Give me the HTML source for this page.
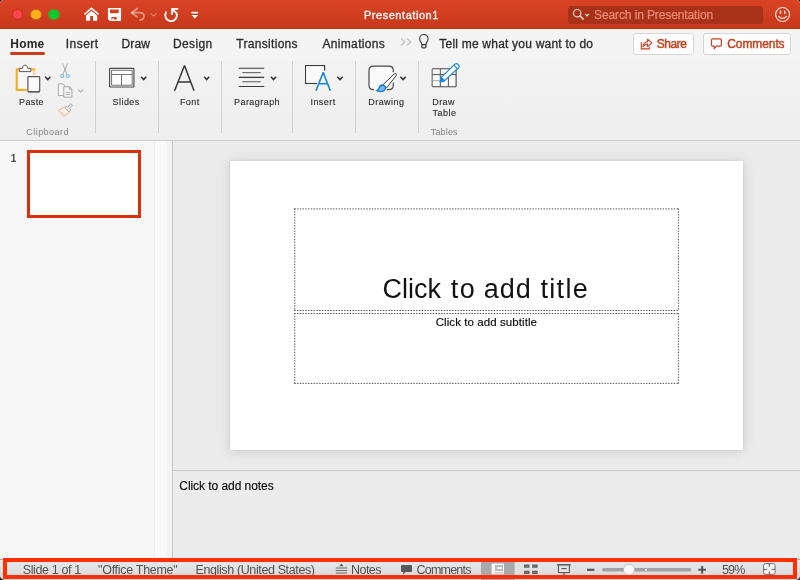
<!DOCTYPE html>
<html lang="en">
<head>
<meta charset="utf-8">
<title>Presentation1</title>
<style>
html,body{margin:0;padding:0;}
body{width:800px;height:580px;overflow:hidden;position:relative;background:linear-gradient(90deg,#000 0,#000 12px,rgba(0,0,0,0) 12px) left bottom/100% 12px no-repeat,#1d3463;font-family:"Liberation Sans",sans-serif;}
#win{position:absolute;left:0;top:0;width:800px;height:580px;border-radius:3.5px 3.5px 5px 5px;overflow:hidden;background:#ececec;}
.abs{position:absolute;}
.t{position:absolute;white-space:pre;line-height:1;font-family:"Liberation Sans",sans-serif;}
#titlebar{left:0;top:0;width:800px;height:29px;background:linear-gradient(#d84325 0,#d64123 25%,#d03d1f 55%,#c7381a 100%);box-sizing:border-box;border-bottom:1px solid #b5330f;}
.tl{position:absolute;top:8.8px;width:11.5px;height:11.5px;border-radius:50%;box-sizing:border-box;}
#search{left:568px;top:5.5px;width:195px;height:18px;border-radius:3.5px;background:#a93117;}
#tabs{left:0;top:29px;width:800px;height:31px;background:#f4f4f4;}
#ribbon{left:0;top:60px;width:800px;height:81px;background:linear-gradient(#f3f3f3,#eeeeee);box-sizing:border-box;border-bottom:1px solid #cdcdcd;}
.sep{position:absolute;top:60.5px;width:1px;height:72px;background:#d2d2d2;}
.btn{position:absolute;top:33px;height:21.5px;box-sizing:border-box;border:1px solid #d6d6d6;border-radius:3px;background:#fff;}
#leftp{left:0;top:141px;width:155px;height:418px;background:#f6f6f6;}
#lscroll{left:154px;top:141px;width:18px;height:418px;background:linear-gradient(90deg,#eeeeee 0,#eeeeee 1.5px,#fafafa 1.5px,#fafafa 13px,#f3f3f3 13px);}
#vline{left:172px;top:141px;width:1px;height:418px;background:#c4c4c4;}
#main{left:173px;top:141px;width:627px;height:329px;background:#ebebeb;overflow:hidden;}
#slide{left:57px;top:20px;width:512.5px;height:289px;background:#fff;box-shadow:0 1px 12px rgba(0,0,0,0.13),0 0 2px rgba(0,0,0,0.10);}
#notes{left:173px;top:470px;width:627px;height:89px;background:#ececec;box-sizing:border-box;border-top:1px solid #cbcbcb;}
#status{left:0;top:559px;width:800px;height:21px;background:linear-gradient(#e8e8e8,#d8d8d8);box-sizing:border-box;border-top:1px solid #a8a8a8;}
#redbox{left:3px;top:558px;width:794px;height:21px;box-sizing:border-box;border:4px solid #ff2f00;}
#thumb{left:27px;top:150px;width:114px;height:68px;box-sizing:border-box;border:3px solid #d9300d;background:#fff;}

svg{position:absolute;overflow:visible;}
</style>
</head>
<body>
<div id="win">
<div id="titlebar" class="abs"></div>
<div class="tl" style="left:11.8px;background:#fd474b;border:0.9px solid #cf2326;"></div>
<div class="tl" style="left:30.1px;background:#fdb11d;border:0.9px solid #c5631b;"></div>
<div class="tl" style="left:48.3px;background:#05cb30;border:0.9px solid #6f8a1c;"></div>
<div id="search" class="abs"></div>
<div id="tabs" class="abs"></div>
<div id="ribbon" class="abs"></div>
<div class="abs" style="left:10px;top:52.3px;width:35px;height:2.8px;border-radius:1.4px;background:#cb3a1a;"></div>
<div class="btn" style="left:633px;width:61px;"></div>
<div class="btn" style="left:703.2px;width:87.4px;"></div>
<div class="sep" style="left:95px;"></div>
<div class="sep" style="left:158px;"></div>
<div class="sep" style="left:221px;"></div>
<div class="sep" style="left:292px;"></div>
<div class="sep" style="left:355px;"></div>
<div class="sep" style="left:418px;"></div>
<div id="leftp" class="abs"></div>
<div id="lscroll" class="abs"></div>
<div id="vline" class="abs"></div>
<div id="thumb" class="abs"></div>
<div id="main" class="abs"><div id="slide" class="abs"></div></div>
<div id="notes" class="abs"></div>
<div id="status" class="abs"></div>
<svg class="abs" style="left:0;top:0" width="800" height="580" viewBox="0 0 800 580" fill="none">
<!-- placeholders -->
<g stroke="#505050" stroke-width="1" stroke-dasharray="1.4 1.37" fill="none">
  <path d="M294.25 208.9 H678.9 M294.25 310.5 H678.9 M294.25 313.5 H678.9 M294.25 383.4 H678.9"/>
  <path d="M294.75 208.4 V311 M678.4 208.4 V311 M294.75 313 V383.9 M678.4 313 V383.9"/>
</g>
<!-- ===== title bar icons ===== -->
<g fill="#fff">
  <!-- home -->
  <path d="M91.5 7.2 L99.1 13.8 L98.1 14.9 L91.5 9.2 L84.9 14.9 L83.9 13.8 Z"/>
  <path d="M91.5 10.7 L97.2 15.5 L97.2 20.8 L93 20.8 L93 16 L90.2 16 L90.2 20.8 L86 20.8 L86 15.5 Z"/>
  <!-- save -->
  <path fill-rule="evenodd" d="M109 8 H120.2 Q121.1 8 121.1 8.9 V20.1 Q121.1 21 120.2 21 H110 L107.9 19.2 V9 Q107.9 8 109 8 Z M110 9.4 V12.6 Q110 13.3 110.8 13.3 H118 Q118.8 13.3 118.8 12.6 V9.4 Z M111.4 17 V19.6 H112.6 V18 H114 V19.6 H116.8 V17.8 Q116.8 17 116 17 Z"/>
  <!-- customize -->
  <rect x="191.5" y="11.8" width="6.6" height="1.7"/>
  <path d="M191.5 14.9 H198.1 L194.8 18.7 Z"/>
</g>
<!-- undo (dim) -->
<g stroke="#fff" stroke-opacity="0.45" stroke-width="1.7" stroke-linecap="round" stroke-linejoin="round">
  <path d="M137.3 8.5 L131.5 12.7 L137.3 16.8"/>
  <path d="M132 12.7 H139.5 Q144 12.9 144 16.3 Q144 19.6 140 20.1"/>
</g>
<path d="M150.8 13.3 L153.5 16.2 L156.2 13.3" stroke="#fff" stroke-opacity="0.5" stroke-width="1" />
<!-- repeat -->
<g stroke="#fff" stroke-width="1.8">
  <path d="M166 12.3 A5.85 5.85 0 1 0 176.6 13.4 L172.8 9.6" stroke-linecap="round" stroke-linejoin="round"/>
  <path d="M172.1 15 V8.9 H178.4" stroke-linejoin="miter"/>
</g>
<!-- search magnifier -->
<g stroke="#f7d8cf" stroke-width="1.2">
  <circle cx="577.2" cy="13.2" r="3.7"/>
  <path d="M579.9 15.9 L583.2 19.1" stroke-width="1.5" stroke-linecap="round"/>
  <path d="M585 13.9 L587 15.6 L589 13.9" stroke-width="1.2" stroke="#fbe8e2"/>
</g>
<!-- smiley -->
<g stroke="#fbe3dc" stroke-width="1.2">
  <circle cx="782.6" cy="14.5" r="7"/>
  <path d="M778.6 16.4 Q782.6 20.4 786.6 16.4" stroke-width="1.3" stroke-linecap="round"/>
  <path d="M780.5 11.3 V13.6 M784.7 11.3 V13.6" stroke-width="1.4" stroke-linecap="round"/>
</g>
<!-- ===== tab row icons ===== -->
<g stroke="#c8c8c8" stroke-width="1.5">
  <path d="M401.2 38.5 L404.9 41.9 L401.2 45.4"/>
  <path d="M406.8 38.5 L410.8 41.9 L406.8 45.4"/>
</g>
<g stroke="#3c3c3c" stroke-width="1.1" stroke-linejoin="round">
  <path d="M421.9 44.6 C421.9 42.4 419.7 41.6 419.7 38.7 A4.2 4.2 0 0 1 428.1 38.7 C428.1 41.6 425.9 42.4 425.9 44.6 Z"/>
  <path d="M421.9 44.6 V46.8 Q421.9 47.8 422.9 47.8 H424.9 Q425.9 47.8 425.9 46.8 V44.6" stroke-width="1.3"/>
</g>
<!-- share icon -->
<g stroke="#c7401d" stroke-width="1.1" stroke-linejoin="round" stroke-linecap="round">
  <path d="M641.3 42.6 V48.9 H649.3 V47"/>
  <path d="M643 46.8 C643.3 43.6 645.2 41.9 647.6 41.7 V39.2 L651.9 42.9 L647.6 46.6 V44.1 C645.8 44.1 644.2 44.9 643 46.8 Z"/>
</g>
<!-- comments icon -->
<path d="M712.6 38.9 H720.3 Q721.4 38.9 721.4 40 V45 Q721.4 46.1 720.3 46.1 H716.6 L714.3 48.7 V46.1 H712.6 Q711.5 46.1 711.5 45 V40 Q711.5 38.9 712.6 38.9 Z" stroke="#c7401d" stroke-width="1.2" stroke-linejoin="round"/>
<!-- ===== ribbon: paste ===== -->
<rect x="16.7" y="69.4" width="17.5" height="20.5" fill="#f8f8f8" stroke="#fda716" stroke-width="2"/>
<path d="M19.4 71.6 V68.4 H22.4 C22.6 66.4 23.7 65.2 25.1 65.2 C26.5 65.2 27.6 66.4 27.8 68.4 H30.8 V71.6 Z" fill="#fff" stroke="#5a5a5a" stroke-width="1"/>
<path d="M34.2 70.4 V75.4" stroke="#fbd9b6" stroke-width="2"/><rect x="27.9" y="76.6" width="11.8" height="15.2" rx="0.8" fill="none" stroke="#f6f6f6" stroke-width="2.6"/><rect x="27.9" y="76.6" width="11.8" height="15.2" rx="0.8" fill="#fafafa" stroke="#555" stroke-width="1.2"/>
<path d="M28.2 91.9 H39.4" stroke="#444" stroke-width="0.8"/>
<g stroke="#333" stroke-width="1.6" stroke-linejoin="miter">
  <path d="M45.2 76.8 L47.8 79.6 L50.4 76.8"/>
  <path d="M141.1 76.8 L143.65 79.6 L146.2 76.8"/>
  <path d="M204.2 76.8 L206.7 79.6 L209.2 76.8" stroke-width="1.5"/>
  <path d="M271 76.8 L273.5 79.6 L276 76.8"/>
  <path d="M337.3 76.8 L340 79.6 L342.7 76.8"/>
  <path d="M400.4 76.8 L403.05 79.6 L405.7 76.8"/>
</g>
<!-- scissors (dim) -->
<g stroke="#a4a4a4" stroke-width="0.9" stroke-linecap="round">
  <path d="M62.6 63.8 L66.9 74.2 M67.4 63.8 L63 74.2"/>
</g>
<g stroke="#7fbbe4" stroke-width="1.1">
  <circle cx="62.2" cy="76" r="1.5"/><circle cx="67.8" cy="76" r="1.5"/>
</g>
<!-- copy (dim) -->
<g stroke="#a2a2a2" stroke-width="0.9" fill="#f6f6f6" stroke-linejoin="round">
  <path d="M58.4 83.9 H63 L64.4 85.3 V95.5 H58.4 Z"/>
  <path d="M63.8 86.7 H69.4 L71.9 89.2 V97.2 H63.8 Z"/>
  <path d="M69.4 86.7 V89.2 H71.9" fill="none"/>
  <path d="M65.8 92.4 H70 M65.8 94.4 H70" fill="none" stroke-width="0.8"/>
</g>
<path d="M78.1 89.6 L80.7 92.2 L83.3 89.6" stroke="#b4b4b4" stroke-width="1.3"/>
<!-- format painter (dim) -->
<g stroke-linejoin="round">
  <path d="M64.4 107.2 L58.4 110.4 L63.6 116.4 L69.4 112.4 Z" fill="#fdf1e9" stroke="#f5b08a" stroke-width="1"/>
  <path d="M60.8 111.6 L63.8 114.8" stroke="#f5b08a" stroke-width="0.8"/>
  <path d="M70.6 103.6 L72.4 105.2 L69.4 108.6 L70.8 110 L69 111.9 L64.9 107.9 L66.8 106.2 L68 107.2 Z" fill="#ececec" stroke="#a6a6a6" stroke-width="0.9"/>
</g>
<!-- slides icon -->
<rect x="109.6" y="68.4" width="24.3" height="18.6" rx="0.6" fill="#fdfdfd" stroke="#484848" stroke-width="1.15"/>
<rect x="111.6" y="70.3" width="20.6" height="14.9" fill="#fcfcfc" stroke="#686868" stroke-width="0.9"/>
<path d="M111.6 74.5 H132.2 M121.5 74.5 V85.2" stroke="#646464" stroke-width="0.9"/>
<!-- font A -->
<path d="M174.6 90.8 L184.5 65.4 L194 90.8 M178.3 81.9 H190.6" stroke="#363636" stroke-width="1.5" stroke-linejoin="miter" stroke-miterlimit="1"/>
<!-- paragraph -->
<g stroke-width="1.1">
  <path d="M238.8 68.3 H264.2 M238.8 77.4 H264.2 M238.8 86.5 H264.2" stroke="#3a3a3a"/>
  <path d="M242.3 72.65 H260.7 M242.3 81.75 H260.7" stroke="#585858" stroke-width="1"/>
</g>
<!-- insert -->
<path d="M317 83.4 H305.6 V65.6 H324.6 V70.6" fill="none" stroke="#3a3a3a" stroke-width="1.2"/>
<path d="M306.2 66.2 H324 V72 L317.5 82.8 H306.2 Z" fill="#fafafa"/>
<path d="M316 90.8 L323.2 72.4 L330.3 90.8 M318.7 83.8 H327.7" stroke="#1c86d6" stroke-width="1.6" stroke-linejoin="miter" stroke-miterlimit="1"/>
<!-- drawing -->
<rect x="369" y="66.1" width="24.3" height="23.6" rx="4.4" fill="#fafafa"/>
<path d="M374 89.7 H373.4 Q369 89.7 369 85.3 V70.5 Q369 66.1 373.4 66.1 H388.9 Q393.3 66.1 393.3 70.5 V72.2 M393.3 82.6 V85.3 Q393.3 89.7 388.9 89.7 H387" stroke="#484848" stroke-width="1.2"/>
<path d="M395.9 73.7 Q396.9 74.5 396.2 75.7 L386.7 87.7 L383.1 84.6 L394.2 74 Q395.1 73.1 395.9 73.7 Z" fill="#fff" stroke="#3c3c3c" stroke-width="1"/>
<path d="M383.6 84.6 C381.6 83.8 379.2 85 378.6 87.2 C378.2 88.8 377 89.8 375.2 90.3 C377.4 92.4 381.6 92.9 384.2 91.2 C386.4 89.8 386.8 87.2 385.9 86.6 Z" fill="#1c80d2"/>
<path d="M383 86 C381.6 85.8 380.3 86.6 379.9 88 C379.6 89.2 379 90 378 90.6 C379.8 91.4 382.2 91.2 383.6 90.1 C384.8 89.1 385 87.4 384.4 86.8 Z" fill="#7bb9ea"/>
<!-- draw table -->
<rect x="432.3" y="68.8" width="23.8" height="18" rx="0.8" fill="#fafafa" stroke="#484848" stroke-width="1.1"/>
<path d="M432.3 69.2 V86.4" stroke="#999" stroke-width="1.1"/>
<path d="M440.3 68.8 V86.8 M448.4 76 V86.8 M432.3 74.6 H456.1" stroke="#505050" stroke-width="1"/>
<path d="M432.8 80.7 H440" stroke="#aaa" stroke-width="1"/>
<g stroke="#1c86d6" stroke-width="1.2" stroke-linejoin="round">
  <path d="M440.2 81.8 L441.3 77.4 L455.2 63.9 Q456.6 63 457.9 64.2 L458.6 64.9 Q459.8 66.2 458.8 67.5 L444.6 80.6 Z" fill="#fff"/>
  <path d="M453.9 65.2 L457.5 68.8" />
  <path d="M440.2 81.8 L441.3 77.4 L444.6 80.6 Z" fill="#1c86d6"/>
</g>
<!-- ===== status bar icons ===== -->
<rect x="481" y="559" width="33.6" height="21" fill="#a9a9a9"/>
<rect x="491.6" y="563.4" width="12.4" height="10.8" rx="1" fill="#f8f8f8"/>
<rect x="495" y="565" width="8" height="6" fill="#b9b9b9"/>
<rect x="497.3" y="567" width="4.4" height="2" fill="#fff"/>
<rect x="494.6" y="572.4" width="8.6" height="0.9" fill="#aaa"/>
<g fill="#5c5c5c">
  <rect x="524" y="564.5" width="5.4" height="3.3" rx="0.5"/><rect x="532.2" y="564.5" width="5.4" height="3.3" rx="0.5"/>
  <rect x="524" y="570.8" width="5.4" height="3.3" rx="0.5"/><rect x="532.2" y="570.8" width="5.4" height="3.3" rx="0.5"/>
</g>
<g fill="#8a8a8a">
  <rect x="525.2" y="565.7" width="3" height="0.9"/><rect x="533.4" y="565.7" width="3" height="0.9"/>
  <rect x="525.2" y="572" width="3" height="0.9"/><rect x="533.4" y="572" width="3" height="0.9"/>
</g>
<g stroke="#585858" stroke-width="1.1">
  <path d="M557 564.8 H570.8" stroke-width="1.3"/>
  <rect x="558.5" y="565" width="10.9" height="7.6" fill="#e4e4e4"/>
  <path d="M561.4 568.6 H566.6" stroke-width="1.2"/>
  <path d="M563.95 572.6 V575 M561.6 575.2 H566.3" stroke-width="1"/>
</g>
<!-- notes icon -->
<path d="M339.3 566.3 L341.4 563.6 L343.5 566.3 Z" fill="#5a5a5a"/>
<path d="M335.8 568 H347.2 M335.8 570.5 H347.2 M335.8 573 H347.2" stroke="#6a6a6a" stroke-width="1"/>
<!-- comments icon (status) -->
<path d="M402 565 H411 Q412 565 412 566 V571 Q412 572 411 572 H405.6 L403.2 574.4 V572 H402 Q401 572 401 571 V566 Q401 565 402 565 Z" fill="#585858"/>
<!-- zoom controls -->
<rect x="587" y="568.7" width="7.4" height="2.2" fill="#555"/>
<rect x="602" y="568" width="89.4" height="3.4" rx="1.7" fill="#a2a2a2"/>
<circle cx="646" cy="569.7" r="1" fill="#eee"/>
<circle cx="629" cy="569.7" r="5.4" fill="#fdfdfd" stroke="#b4b4b4" stroke-width="0.7"/>
<path d="M698.3 569.8 H706 M702.15 565.9 V573.7" stroke="#555" stroke-width="2"/>
<!-- fit icon -->
<g>
  <rect x="763.6" y="563.6" width="11.4" height="10.8" rx="1.6" fill="#f6f6f6" stroke="#707070" stroke-width="1"/>
  <g fill="#666">
    <path d="M763.8 568.7 L767.9 569.4 L763.8 570.1 Z"/><path d="M774.8 568.7 L770.7 569.4 L774.8 570.1 Z"/>
    <path d="M768.6 563.8 L769.3 567.6 L770 563.8 Z"/><path d="M768.6 574.2 L769.3 570.8 L770 574.2 Z"/>
  </g>
  <path d="M763.8 569.4 H767.4 M771.2 569.4 H774.8 M769.3 563.8 V567.2 M769.3 571.2 V574.2" stroke="#666" stroke-width="0.7"/>
</g>
</svg>

<div class="abs" style="left:0;top:0;width:800px;height:580px;will-change:transform;">
<span class="t" style="left:363.88px;top:10px;font-size:11px;color:#fff;letter-spacing:0.550px;-webkit-text-stroke:0.3px #fff;">Presentation1</span>
<span class="t" style="left:594.07px;top:9px;font-size:12px;color:#e98a75;letter-spacing:-0.111px;-webkit-text-stroke:0.25px #e98a75;">Search in Presentation</span>
<span class="t" style="left:10.33px;top:38px;font-size:12px;color:#262626;letter-spacing:0.210px;font-weight:700;">Home</span>
<span class="t" style="left:65.78px;top:38px;font-size:12px;color:#2b2b2b;letter-spacing:0.452px;-webkit-text-stroke:0.3px #2b2b2b;">Insert</span>
<span class="t" style="left:121.58px;top:38px;font-size:12px;color:#2b2b2b;letter-spacing:0.111px;-webkit-text-stroke:0.3px #2b2b2b;">Draw</span>
<span class="t" style="left:172.90px;top:38px;font-size:12px;color:#2b2b2b;letter-spacing:0.398px;-webkit-text-stroke:0.3px #2b2b2b;">Design</span>
<span class="t" style="left:236.33px;top:38px;font-size:12px;color:#2b2b2b;letter-spacing:0.303px;-webkit-text-stroke:0.3px #2b2b2b;">Transitions</span>
<span class="t" style="left:322.45px;top:38px;font-size:12px;color:#2b2b2b;letter-spacing:0.336px;-webkit-text-stroke:0.3px #2b2b2b;">Animations</span>
<span class="t" style="left:439.32px;top:38px;font-size:12px;color:#2b2b2b;letter-spacing:0.214px;-webkit-text-stroke:0.3px #2b2b2b;">Tell me what you want to do</span>
<span class="t" style="left:656.75px;top:38px;font-size:12px;color:#c7401d;letter-spacing:-0.433px;-webkit-text-stroke:0.45px #c7401d;">Share</span>
<span class="t" style="left:727.27px;top:38px;font-size:12px;color:#c7401d;letter-spacing:-0.095px;-webkit-text-stroke:0.45px #c7401d;">Comments</span>
<span class="t" style="left:19.02px;top:98px;font-size:9px;color:#2b2b2b;letter-spacing:0.390px;-webkit-text-stroke:0.12px #2b2b2b;">Paste</span>
<span class="t" style="left:112.56px;top:98px;font-size:9px;color:#2b2b2b;letter-spacing:0.450px;-webkit-text-stroke:0.12px #2b2b2b;">Slides</span>
<span class="t" style="left:179.88px;top:98px;font-size:9px;color:#2b2b2b;letter-spacing:0.450px;-webkit-text-stroke:0.12px #2b2b2b;">Font</span>
<span class="t" style="left:234.00px;top:98px;font-size:9px;color:#2b2b2b;letter-spacing:0.450px;-webkit-text-stroke:0.12px #2b2b2b;">Paragraph</span>
<span class="t" style="left:310.44px;top:98px;font-size:9px;color:#2b2b2b;letter-spacing:0.450px;-webkit-text-stroke:0.12px #2b2b2b;">Insert</span>
<span class="t" style="left:368.25px;top:98px;font-size:9px;color:#2b2b2b;letter-spacing:0.450px;-webkit-text-stroke:0.12px #2b2b2b;">Drawing</span>
<span class="t" style="left:432.19px;top:98px;font-size:9px;color:#2b2b2b;letter-spacing:0.450px;-webkit-text-stroke:0.12px #2b2b2b;">Draw</span>
<span class="t" style="left:432.62px;top:109px;font-size:9px;color:#2b2b2b;letter-spacing:0.450px;-webkit-text-stroke:0.12px #2b2b2b;">Table</span>
<span class="t" style="left:430.82px;top:128px;font-size:9px;color:#848484;letter-spacing:0.142px;">Tables</span>
<span class="t" style="left:26.30px;top:128px;font-size:9px;color:#848484;letter-spacing:0.450px;">Clipboard</span>
<span class="t" style="left:10.83px;top:154px;font-size:10px;color:#4a4a4a;letter-spacing:0.000px;font-weight:700;">1</span>
<span class="t" style="left:0;top:0;font-size:0;"><span class="t" style="left:382.45px;top:276px;font-size:27px;color:#121212;letter-spacing:0.025px;">Click</span> <span class="t" style="left:450.81px;top:276px;font-size:27px;color:#121212;letter-spacing:1.350px;">to</span> <span class="t" style="left:483.77px;top:276px;font-size:27px;color:#121212;letter-spacing:0.919px;">add</span> <span class="t" style="left:540.38px;top:276px;font-size:27px;color:#121212;letter-spacing:1.350px;">title</span></span>
<span class="t" style="left:435.73px;top:317px;font-size:11.5px;color:#0a0a0a;letter-spacing:0.078px;-webkit-text-stroke:0.15px #0a0a0a;">Click to add subtitle</span>
<span class="t" style="left:179.30px;top:480px;font-size:12px;color:#000;letter-spacing:-0.058px;-webkit-text-stroke:0.1px #000;">Click to add notes</span>
<span class="t" style="left:22.70px;top:564px;font-size:12.5px;color:#505050;letter-spacing:-0.375px;">Slide 1 of 1</span>
<span class="t" style="left:98.05px;top:564px;font-size:12.5px;color:#505050;letter-spacing:-0.291px;">&quot;Office Theme&quot;</span>
<span class="t" style="left:195.45px;top:564px;font-size:12.5px;color:#505050;letter-spacing:-0.376px;">English (United States)</span>
<span class="t" style="left:351.05px;top:564px;font-size:12.5px;color:#505050;letter-spacing:-0.570px;">Notes</span>
<span class="t" style="left:416.62px;top:564px;font-size:12.5px;color:#505050;letter-spacing:-0.805px;">Comments</span>
<span class="t" style="left:721.88px;top:564px;font-size:12.5px;color:#505050;letter-spacing:-0.741px;">59%</span>
</div>
<div id="redbox" class="abs"></div>
</div>
</body>
</html>
